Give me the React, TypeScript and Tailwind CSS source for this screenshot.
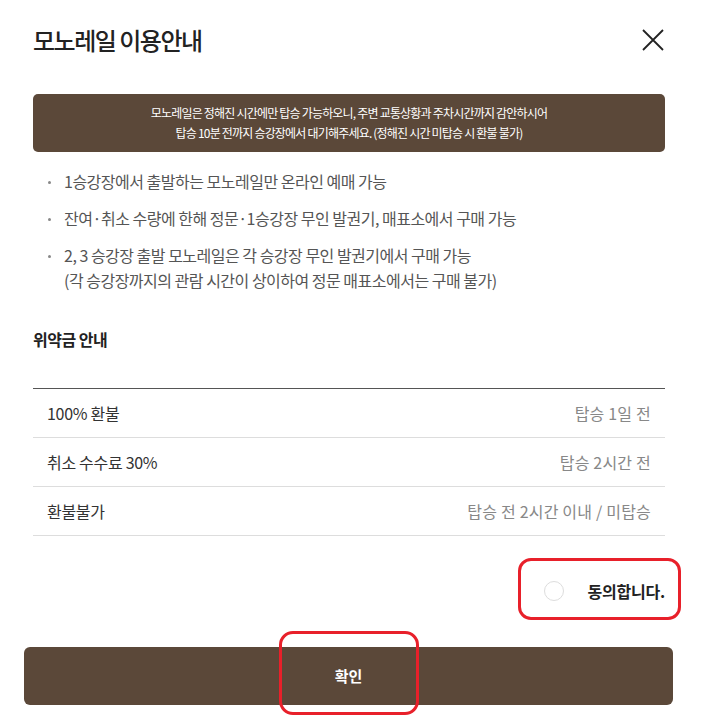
import React, { useState } from 'react';

const notices = [
  ['1승강장에서 출발하는 모노레일만 온라인 예매 가능'],
  ['잔여·취소 수량에 한해 정문·1승강장 무인 발권기, 매표소에서 구매 가능'],
  ['2, 3 승강장 출발 모노레일은 각 승강장 무인 발권기에서 구매 가능', '(각 승강장까지의 관람 시간이 상이하여 정문 매표소에서는 구매 불가)'],
];

const penalties = [
  { label: '100% 환불', when: '탑승 1일 전' },
  { label: '취소 수수료 30%', when: '탑승 2시간 전' },
  { label: '환불불가', when: '탑승 전 2시간 이내 / 미탑승' },
];

export default function App() {
  const [agreed, setAgreed] = useState(false);

  return (
    <div className="relative w-[701px] h-[724px] overflow-hidden bg-white font-['Noto_Sans_CJK_KR',sans-serif] text-[#222]">
      <div className="pl-[33px] pr-[36px]">
        {/* Header */}
        <div className="flex items-center justify-between pt-[22px]">
          <h1 className="text-[24px] leading-[36px] font-medium tracking-[-1.5px] text-[#222]">모노레일 이용안내</h1>
          <button className="flex h-[24px] w-[24px] items-center justify-center">
            <svg width="22" height="22" viewBox="0 0 22 22" fill="none" stroke="#222" strokeWidth="1.8">
              <path d="M1 1L21 21M21 1L1 21" />
            </svg>
          </button>
        </div>

        {/* Banner */}
        <div className="mt-[36px] rounded-[5px] bg-[#5b4839] py-[9px] text-center text-[12px] leading-[20px] tracking-[-0.8px] text-white">
          <p>모노레일은 정해진 시간에만 탑승 가능하오니, 주변 교통상황과 주차시간까지 감안하시어</p>
          <p>탑승 10분 전까지 승강장에서 대기해주세요. (정해진 시간 미탑승 시 환불 불가)</p>
        </div>

        {/* Notices */}
        <ul className="mt-[17px] space-y-[12px] text-[16px] leading-[25px] tracking-[-0.5px] text-[#555]">
          {notices.map((lines, i) => (
            <li key={i} className="flex">
              <span className="mt-[12px] ml-[15px] mr-[13px] h-[3px] w-[3px] shrink-0 rounded-full bg-[#888]" />
              <div>
                {lines.map(l => (
                  <p key={l}>{l}</p>
                ))}
              </div>
            </li>
          ))}
        </ul>

        {/* Penalty */}
        <h2 className="mt-[34px] text-[16px] leading-[24px] font-bold tracking-[-0.5px] text-[#222]">위약금 안내</h2>
        <div className="mt-[37px] border-t border-[#555]">
          {penalties.map(p => (
            <div key={p.label} className="flex h-[49px] items-center justify-between border-b border-[#ddd] px-[14px] text-[16px]">
              <span className="tracking-[-0.3px] text-[#333]">{p.label}</span>
              <span className="tracking-[0.2px] text-[#888]">{p.when}</span>
            </div>
          ))}
        </div>

        {/* Agree */}
        <div className="mt-[43px] flex justify-end">
          <label className="flex cursor-pointer items-center gap-[23px]" onClick={() => setAgreed(!agreed)}>
            <span className={`h-[20px] w-[20px] rounded-full border ${agreed ? 'border-[#5b4839] bg-[#5b4839]' : 'border-[#ddd] bg-white'}`} />
            <span className="text-[16px] leading-[24px] font-bold tracking-[-0.2px] text-[#222]">동의합니다.</span>
          </label>
        </div>
      </div>

      {/* Confirm */}
      <button className="mx-[24px] mt-[44px] flex h-[58px] w-[649px] items-center justify-center rounded-[6px] bg-[#5b4839] text-[15px] font-bold text-white">
        확인
      </button>

      {/* Red annotation marks */}
      <div className="pointer-events-none absolute left-[518px] top-[558px] h-[62px] w-[163px] rounded-[13px] border-[3px] border-[#e8202a]" />
      <div className="pointer-events-none absolute left-[279px] top-[631px] h-[84px] w-[140px] rounded-[14px] border-[3px] border-[#e8202a]" />
    </div>
  );
}
